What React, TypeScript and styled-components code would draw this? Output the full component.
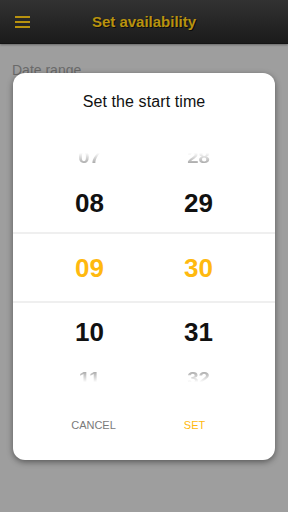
import React from "react";
import styled, { createGlobalStyle, css } from "styled-components";

const Global = createGlobalStyle`
  html, body { margin: 0; padding: 0; }
  body {
    width: 288px;
    height: 512px;
    overflow: hidden;
    background: #9e9e9e;
    font-family: "Liberation Sans", Arial, sans-serif;
  }
`;

const Page = styled.div`
  width: 288px;
  height: 512px;
  position: relative;
  background: #9e9e9e;
`;

const Header = styled.header`
  height: 43px;
  display: flex;
  align-items: center;
  justify-content: center;
  position: relative;
  background: linear-gradient(#323232, #1b1b1b);
  border-bottom: 1px solid #141414;
  box-shadow: 0 1px 2px rgba(0, 0, 0, 0.35);
`;

const MenuButton = styled.div`
  position: absolute;
  left: 15px;
  top: 16px;
  width: 15px;
  height: 12px;
  display: flex;
  flex-direction: column;
  justify-content: space-between;
`;

const MenuLine = styled.span`
  display: block;
  height: 2px;
  background: #b8920f;
`;

const HeaderTitle = styled.h1`
  margin: 0;
  font-size: 15px;
  font-weight: bold;
  color: #b8920f;
  text-shadow: 1px 1px 0 #0c0c0c;
`;

const Content = styled.div`
  padding: 18px 12px;
`;

const FieldLabel = styled.div`
  font-size: 14px;
  color: #6a6a6a;
  line-height: 16px;
`;

const Overlay = styled.div`
  position: absolute;
  inset: 0;
  display: flex;
  justify-content: center;
  align-items: flex-start;
  padding-top: 73px;
`;

const Dialog = styled.div`
  width: 262px;
  height: 387px;
  box-sizing: border-box;
  background: #fff;
  border-radius: 12px;
  box-shadow: 0 2px 6px rgba(0, 0, 0, 0.45);
  display: flex;
  flex-direction: column;
  padding-top: 20px;
`;

const DialogTitle = styled.div`
  text-align: center;
  font-size: 16px;
  line-height: 18px;
  color: #111;
  letter-spacing: 0.1px;
  margin-bottom: 29px;
`;

const Wheel = styled.div`
  display: flex;
  flex-direction: column;
`;

type RowKind = "faded-top" | "normal" | "selected" | "faded-bottom";

const Row = styled.div<{ $kind: RowKind }>`
  display: grid;
  grid-template-columns: 1fr 1fr;
  padding: 0 22px;
  align-items: center;
  height: ${(p) =>
    p.$kind === "selected" ? "67px" : p.$kind === "normal" ? "58px" : "34px"};
  ${(p) =>
    p.$kind === "selected" &&
    css`
      border-top: 2px solid #efefef;
      border-bottom: 2px solid #efefef;
    `}
`;

const Digit = styled.span<{ $kind: RowKind }>`
  display: block;
  text-align: center;
  font-weight: bold;
  font-size: 26px;
  line-height: 30px;
  color: #111;
  ${(p) =>
    p.$kind === "selected" &&
    css`
      color: #ffb90f;
    `}
  ${(p) =>
    p.$kind === "faded-top" &&
    css`
      font-size: 24px;
      color: #a8a8a8;
      transform: scale(0.85, 0.72);
      -webkit-mask-image: linear-gradient(to bottom, transparent 30%, #000 80%);
      mask-image: linear-gradient(to bottom, transparent 30%, #000 80%);
    `}
  ${(p) =>
    p.$kind === "faded-bottom" &&
    css`
      font-size: 24px;
      color: #a8a8a8;
      transform: scale(0.85, 0.72);
      -webkit-mask-image: linear-gradient(to top, transparent 30%, #000 80%);
      mask-image: linear-gradient(to top, transparent 30%, #000 80%);
    `}
`;

const Actions = styled.div`
  display: grid;
  grid-template-columns: 1fr 1fr;
  padding: 0 30px;
  margin-top: 15px;
  height: 30px;
  align-items: center;
`;

const ActionButton = styled.button<{ $primary?: boolean }>`
  border: none;
  background: none;
  padding: 0;
  font-family: "Liberation Sans", Arial, sans-serif;
  font-size: 11px;
  text-transform: uppercase;
  color: ${(p) => (p.$primary ? "#ffb90f" : "#7a7a7a")};
  text-align: center;
`;

const rows: { kind: RowKind; h: string; m: string }[] = [
  { kind: "faded-top", h: "07", m: "28" },
  { kind: "normal", h: "08", m: "29" },
  { kind: "selected", h: "09", m: "30" },
  { kind: "normal", h: "10", m: "31" },
  { kind: "faded-bottom", h: "11", m: "32" },
];

export default function App() {
  return (
    <>
      <Global />
      <Page>
        <Header>
          <MenuButton>
            <MenuLine />
            <MenuLine />
            <MenuLine />
          </MenuButton>
          <HeaderTitle>Set availability</HeaderTitle>
        </Header>
        <Content>
          <FieldLabel>Date range</FieldLabel>
        </Content>
        <Overlay>
          <Dialog>
            <DialogTitle>Set the start time</DialogTitle>
            <Wheel>
              {rows.map((r) => (
                <Row key={r.h} $kind={r.kind}>
                  <Digit $kind={r.kind}>{r.h}</Digit>
                  <Digit $kind={r.kind}>{r.m}</Digit>
                </Row>
              ))}
            </Wheel>
            <Actions>
              <ActionButton>Cancel</ActionButton>
              <ActionButton $primary>Set</ActionButton>
            </Actions>
          </Dialog>
        </Overlay>
      </Page>
    </>
  );
}
